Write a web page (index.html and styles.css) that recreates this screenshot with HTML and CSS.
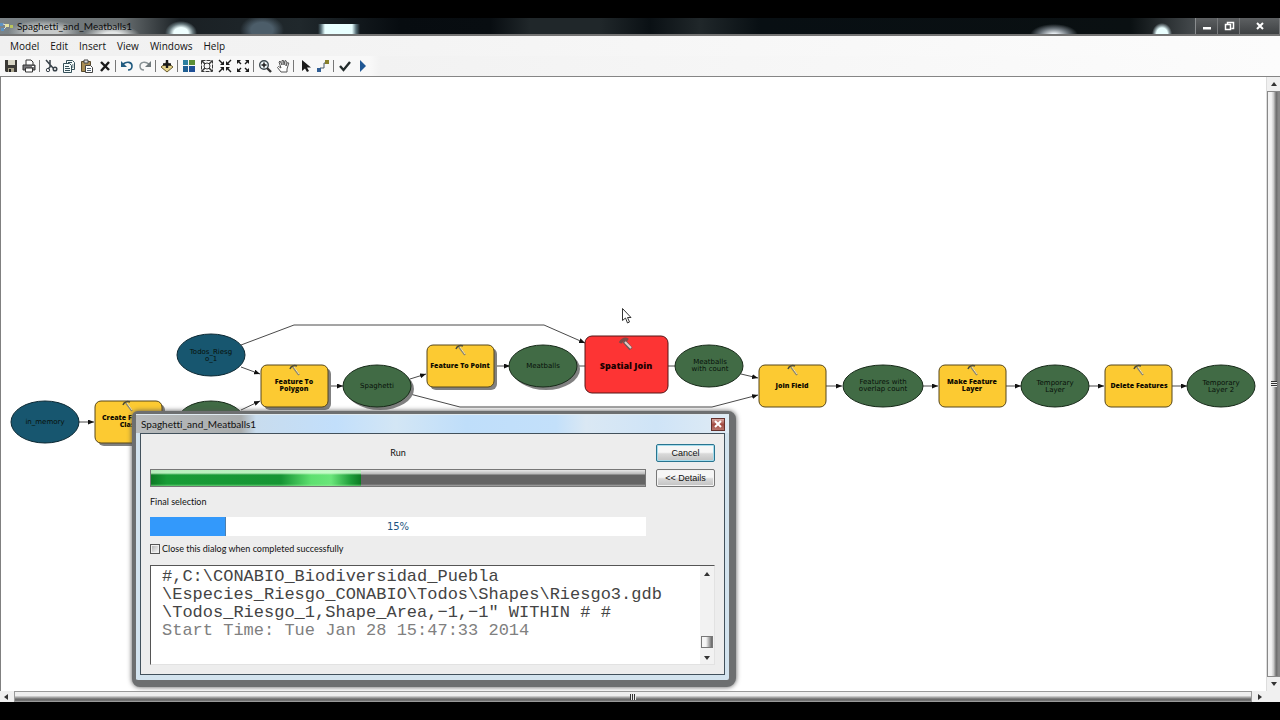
FILE: index.html
```html
<!DOCTYPE html>
<html lang="en">
<head>
<meta charset="utf-8">
<title>Spaghetti_and_Meatballs1</title>
<link rel="stylesheet" href="styles.css">
</head>
<body>
<div class="window">
  <header class="titlebar">
    <svg class="app-icon" viewBox="0 0 14 14" aria-hidden="true"><path d="M0 4h3v3H0zM1 9h3v3H1z" fill="#5d93c4"/><path d="M3 5l3 1M4 10l3-3" stroke="#cde" fill="none"/><rect x="5" y="5" width="4" height="3" fill="#e5e1a0"/><rect x="10" y="6" width="3" height="3" fill="#b9c55c"/></svg>
    <h1 class="title">Spaghetti_and_Meatballs1</h1>
    <div class="caption-buttons">
      <button class="caption" aria-label="Minimize"><svg viewBox="0 0 12 12"><path d="M2 7h8v2.500H2z" fill="#fff"/></svg></button>
      <button class="caption" aria-label="Restore"><svg viewBox="0 0 12 12"><path d="M4.500 4V2.500h6v6H8.500M2.500 4.500h5v5h-5z" fill="none" stroke="#fff" stroke-width="1.500"/></svg></button>
      <button class="caption caption-close" aria-label="Close"><svg viewBox="0 0 12 12"><path d="M3 3l6 6M9 3l-6 6" stroke="#fff" stroke-width="2"/></svg></button>
    </div>
  </header>
  <nav class="menubar">
    <button>Model</button><button>Edit</button><button>Insert</button><button>View</button><button>Windows</button><button>Help</button>
  </nav>
  <div class="toolbar" role="toolbar">
    <button aria-label="Save"><svg viewBox="0 0 14 14"><path d="M1 1h12v12H2l-1-1z" fill="#3c3a36"/><path d="M4 1h7v5H4z" fill="#d9d6c6"/><path d="M4 9h6v4H4z" fill="#a9a38c"/><path d="M5 10h2v3H5z" fill="#222"/></svg></button>
    <button aria-label="Print"><svg viewBox="0 0 14 14"><path d="M4 6V1h5l2 2v3" fill="#fff" stroke="#333"/><path d="M1 6h12v5H1z" fill="#77777a" stroke="#333"/><path d="M3.500 9h7v4h-7z" fill="#fff" stroke="#333"/><path d="M10 7.500h2" stroke="#fff"/></svg></button>
    <i class="sep"></i>
    <button aria-label="Cut"><svg viewBox="0 0 14 14" fill="none" stroke="#39424a"><path d="M2 1l7 8M6 1v7l-2 2" stroke-width="1.500"/><circle cx="4" cy="11" r="1.700"/><circle cx="11" cy="10" r="1.800" stroke-width="1.500"/></svg></button>
    <button aria-label="Copy"><svg viewBox="0 0 14 14" fill="#f4fbfb" stroke="#36515a"><path d="M4.500 1.500h6l2 2v7h-8z"/><path d="M1.500 4.500h6l2 2v7h-8z"/><path d="M3 7.500h4M3 9.500h5M3 11.500h5M6 3.500h4M10 6h1.500M10 8h1.500"/></svg></button>
    <button aria-label="Paste"><svg viewBox="0 0 14 14"><path d="M1.500 2.500h9v10h-9z" fill="#a88c54" stroke="#56482c"/><path d="M4 1h4v3H4z" fill="#ddd" stroke="#444"/><path d="M5.500 6.500h5l2 2v5h-7z" fill="#fff" stroke="#444"/><path d="M7 9.500h4M7 11.500h4" stroke="#567"/></svg></button>
    <button aria-label="Delete"><svg viewBox="0 0 14 14"><path d="M3 3l8 8M11 3l-8 9" stroke="#1b1b1b" stroke-width="2.400"/></svg></button>
    <i class="sep"></i>
    <button aria-label="Undo"><svg viewBox="0 0 14 14"><path d="M3 5c4-3 9-2 9 2 0 3-2 4-4 4" fill="none" stroke="#215b80" stroke-width="1.600"/><path d="M1 2v6h6z" fill="#215b80"/></svg></button>
    <button aria-label="Redo"><svg viewBox="0 0 14 14"><path d="M11 5C7 2 2 3 2 7c0 3 2 4 4 4" fill="none" stroke="#8a9396" stroke-width="1.500"/><path d="M13 2v6H7z" fill="#6f787b"/></svg></button>
    <i class="sep"></i>
    <button aria-label="Add data"><svg viewBox="0 0 14 14"><path d="M1 8l6-5 6 5-6 5z" fill="#e6d48c" stroke="#6a5c2c"/><path d="M7 1v8M3 5.500h8" stroke="#1b1b1b" stroke-width="2.400"/></svg></button>
    <i class="sep"></i>
    <button aria-label="Auto layout"><svg viewBox="0 0 14 14"><path d="M1 1h5v5H1z" fill="#2c7fa0"/><path d="M1 7h5v6H1z" fill="#1f5f92"/><path d="M7 1h6v5H7z" fill="#5b8e36"/><path d="M7 7h6v6H7z" fill="#1e4f97"/></svg></button>
    <button aria-label="Full extent"><svg viewBox="0 0 14 14" fill="none" stroke="#3a3a3a"><path d="M1.500 1.500h11v11h-11z" stroke-dasharray="4 1"/><circle cx="7" cy="7" r="3"/><path d="M2 2l3 3M12 2L9 5M2 12l3-3M12 12L9 9" stroke-width="1.500"/></svg></button>
    <button aria-label="Fixed zoom in"><svg viewBox="0 0 14 14" fill="#1b1b1b" stroke="#1b1b1b"><path d="M1 1l4 4M13 1L9 5M1 13l4-4M13 13L9 9" stroke-width="1.400"/><path d="M2 6h4V2zM12 6H8V2zM2 8h4v4zM12 8H8v4z" stroke="none"/></svg></button>
    <button aria-label="Fixed zoom out"><svg viewBox="0 0 14 14" fill="#1b1b1b" stroke="#1b1b1b"><path d="M2 2l3 3M12 2L9 5M2 12l3-3M12 12L9 9" stroke-width="1.400"/><path d="M1 1h4L1 5zM13 1H9l4 4zM1 13h4L1 9zM13 13H9l4-4z" stroke="none"/></svg></button>
    <i class="sep"></i>
    <button aria-label="Zoom in"><svg viewBox="0 0 14 14" fill="none"><circle cx="6" cy="6" r="4.300" fill="#edf5f8" stroke="#3b474d" stroke-width="1.400"/><path d="M9 9l4 4" stroke="#333" stroke-width="2.400"/><path d="M6 3.500v5M3.500 6h5" stroke="#1b1b1b" stroke-width="1.500"/></svg></button>
    <button aria-label="Pan"><svg viewBox="0 0 14 14"><path d="M5 13L1.500 8.500l1-1L5 9 3 3l1-1 2 4V1.500h1.500L8 6l1-4.500 1.300.5L10 7l1.500-3.500 1.300.5L11 10v3z" fill="#fff" stroke="#555"/></svg></button>
    <i class="sep"></i>
    <button aria-label="Select"><svg viewBox="0 0 14 14"><path d="M4 1v11l3-2.500L9 13l2-1-2-3.500h4z" fill="#1b1b1b"/></svg></button>
    <button aria-label="Add connection"><svg viewBox="0 0 14 14"><path d="M4 9h4V4h2" fill="none" stroke="#4a5a66"/><path d="M9 1h4v4H9z" fill="#87802b"/><path d="M1 9h4v4H1z" fill="#315f96"/></svg></button>
    <i class="sep"></i>
    <button aria-label="Validate"><svg viewBox="0 0 14 14"><path d="M2 7l3.500 4L12 3" fill="none" stroke="#222b2b" stroke-width="2.400"/></svg></button>
    <button aria-label="Run"><svg viewBox="0 0 14 14"><path d="M4 1l6 6-6 6z" fill="#1f5794"/></svg></button>
  </div>

  <main class="workspace">
    <div class="canvas">
      <svg class="diagram" width="1266" height="614" viewBox="0 77 1266 614" role="img" aria-label="Model diagram">
        <defs>
          <marker id="arrow" markerWidth="6" markerHeight="5" refX="6" refY="2.500" orient="auto" markerUnits="userSpaceOnUse"><path d="M0 0l6 2.500-6 2.500z" fill="#111"/></marker>
          <g id="hammer"><path d="M-4 4C-3 1 0 0 3 1" fill="none" stroke="#4d4b38" stroke-width="1.500"/><path d="M-1 2l6 8" stroke="#8b8670" stroke-width="2"/><path d="M0 2l5 7" stroke="#f6e3a8"/></g>
          <rect id="tool" x="-34" y="-21" width="67" height="42" rx="6"/>
          <ellipse id="data" rx="34" ry="21"/>
        </defs>
        <g class="edges">
          <path d="M241 345L294 325H544L585 343"/>
          <path d="M241 367L260 374"/>
          <path d="M78 422H94"/>
          <path d="M241 410L260 401"/>
          <path d="M328 386H343"/>
          <path d="M410 379L426 374"/>
          <path d="M494 366H510"/>
          <path d="M410 394L460 407H712L758 395"/>
          <path d="M741 374L758 378"/>
          <path d="M826 386H842"/>
          <path d="M923 386H938"/>
          <path d="M1006 386H1021"/>
          <path d="M1089 386H1104"/>
          <path d="M1172 386H1187"/>
        </g>
        <path class="plain" d="M577 366H586M668 366H676"/>
        <g class="shadow">
          <use href="#tool" x="132" y="425"/><use href="#tool" x="298" y="389"/><use href="#tool" x="464" y="369"/>
          <use href="#data" x="380" y="389"/><use href="#data" x="546" y="369"/>
        </g>
        <g class="input"><use href="#data" x="211" y="355"/><use href="#data" x="45" y="422"/></g>
        <g class="output">
          <use href="#data" x="211" y="422"/><use href="#data" x="377" y="386"/><use href="#data" x="543" y="366"/><use href="#data" x="709" y="366"/>
          <ellipse cx="883" cy="386" rx="40" ry="21"/>
          <use href="#data" x="1055" y="386"/><use href="#data" x="1221" y="386"/>
        </g>
        <g class="process">
          <use href="#tool" x="129" y="422"/><use href="#tool" x="295" y="386"/><use href="#tool" x="461" y="366"/>
          <use href="#tool" x="793" y="386"/><use href="#tool" x="973" y="386"/><use href="#tool" x="1139" y="386"/>
        </g>
        <rect class="running" x="585" y="336" width="83" height="57" rx="7"/>
        <use href="#hammer" x="127" y="401"/><use href="#hammer" x="294" y="365"/><use href="#hammer" x="460" y="345"/><use href="#hammer" x="792" y="365"/><use href="#hammer" x="972" y="365"/><use href="#hammer" x="1138" y="365"/>
        <path d="M620 343c2-3 5-5 8-3" fill="none" stroke="#7d4a46" stroke-width="3"/><path d="M624 341l7 8" stroke="#6b5b5a" stroke-width="4"/><path d="M625 342l6 6" stroke="#e9c9c3" stroke-width="2"/>
        <g class="label">
          <text x="211" y="354">Todos_Riesg</text><text x="211" y="361">o_1</text>
          <text x="45" y="424">in_memory</text>
          <text x="377" y="388">Spaghetti</text>
          <text x="543" y="368">Meatballs</text>
          <text x="710" y="364">Meatballs</text><text x="710" y="371">with count</text>
          <text x="883" y="384">Features with</text><text x="883" y="391">overlap count</text>
          <text x="1055" y="385">Temporary</text><text x="1055" y="392">Layer</text>
          <text x="1221" y="385">Temporary</text><text x="1221" y="392">Layer 2</text>
        </g>
        <g class="label strong">
          <text x="129" y="420">Create Feature</text><text x="129" y="427">Class</text>
          <text x="294" y="384">Feature To</text><text x="294" y="391">Polygon</text>
          <text x="460" y="368">Feature To Point</text>
          <text x="792" y="388">Join Field</text>
          <text x="972" y="384">Make Feature</text><text x="972" y="391">Layer</text>
          <text x="1139" y="388">Delete Features</text>
        </g>
        <text class="label-running" x="626" y="369">Spatial Join</text>
        <path d="M622.500 308.500v12l3-2.500 2 5 2-1-2-4.500h3.500z" fill="#fff" stroke="#333"/>
      </svg>

      <section class="dialog" role="dialog" aria-labelledby="dialog-title">
        <header class="dialog-title">
          <h2 id="dialog-title">Spaghetti_and_Meatballs1</h2>
          <button class="dialog-close" aria-label="Close dialog"><svg viewBox="0 0 10 8"><path d="M2 1l6 6M8 1L2 7" stroke="#fff" stroke-width="2"/></svg></button>
        </header>
        <div class="dialog-body">
          <div class="run-grid">
            <span class="run-label" id="run-label">Run</span>
            <button class="push primary">Cancel</button>
            <div class="marquee" role="progressbar" aria-labelledby="run-label"><div class="marquee-fill"></div></div>
            <button class="push">&lt;&lt; Details</button>
          </div>
          <p class="step" id="step">Final selection</p>
          <div class="percent" role="progressbar" aria-valuenow="15" aria-labelledby="step"><div class="percent-fill" style="width:15.3%"></div><span>15%</span></div>
          <div class="option"><input type="checkbox" id="autoclose"><label for="autoclose">Close this dialog when completed successfully</label></div>
          <div class="log">
            <div class="log-text" role="log" tabindex="0"><div>#,C:\CONABIO_Biodiversidad_Puebla</div><div>\Especies_Riesgo_CONABIO\Todos\Shapes\Riesgo3.gdb</div><div>\Todos_Riesgo_1,Shape_Area,−1,−1" WITHIN # #</div><div class="dim">Start Time: Tue Jan 28 15:47:33 2014</div></div>
            <div class="log-scroll"><i class="up"></i><b></b><i class="down"></i></div>
          </div>
        </div>
      </section>
    </div>
    <div class="vscroll"><i class="up"></i><div class="thumb"><span></span></div><i class="down"></i></div>
    <div class="hscroll"><i class="left"></i><div class="thumb"><span></span></div><i class="right"></i></div>
  </main>
</div>
</body>
</html>
```
FILE: styles.css
```css
* { box-sizing: border-box; }
body { margin: 0; background: #000; font-family: "Liberation Sans", Arial, sans-serif; color: #111; font-variant-ligatures: none; }
button { margin: 0; padding: 0; border: 0; background: none; font: inherit; color: inherit; }
svg { display: block; }
h1, h2, p { margin: 0; font-weight: 400; }

.window { display: flex; flex-direction: column; height: 100vh; padding: 18px 0; }

.titlebar {
  display: flex; align-items: center; height: 18px; flex: none;
  border-bottom: 2px solid #747474;
  background:
    radial-gradient(ellipse 10px 11px at 1162px 16px, #eaffff 55%, #89989c 75%, transparent),
    radial-gradient(ellipse 24px 11px at 1054px 17px, #e4eaef 15%, #687178 60%, transparent),
    linear-gradient(90deg, transparent 318px, #587078 321px, #e8ffff 325px 352px, #587078 356px, transparent 360px) 0 6px no-repeat,
    radial-gradient(ellipse 22px 15px at 262px 12px, #4c5d69 50%, transparent),
    radial-gradient(ellipse 16px 12px at 181px 15px, #efffff 45%, #66777c 75%, transparent),
    radial-gradient(ellipse 28px 10px at 112px 17px, #e2e5e5 30%, transparent),
    radial-gradient(ellipse 36px 12px at 44px 14px, #c7caca 40%, transparent),
    linear-gradient(90deg, #7c8488 0, #6b7173 120px, #1a2024 180px, #20282c 300px, #070c10 400px, #080d11 490px, #20272a 530px, #20272a 600px, #0a1014 650px, #20272a 700px, #080f13 760px, #0a1012 1130px, #454a4d 1195px, #55585a);
}
.app-icon { width: 14px; height: 14px; margin-right: 3px; }
.title { flex: 1; font-family: Lato, sans-serif; font-size: 10px; line-height: 16px; color: #0b0b0b; }
.caption-buttons { display: flex; height: 16px; border-left: 1px solid #8a8d8f; }
.caption { display: grid; place-items: center; width: 22px; border-right: 1px solid #77797b; background: linear-gradient(#5d6062, #3e4143); }
.caption svg { width: 12px; height: 12px; }
.caption-close { width: 40px; }

.menubar { display: flex; gap: 11px; height: 20px; flex: none; padding-left: 10px; background: linear-gradient(90deg, #f0f0f0, #fcfcfc); }
.menubar button { font: 10px/20px "Open Sans", sans-serif; }
.toolbar { display: flex; align-items: center; height: 20px; flex: none; padding-left: 2px; background: linear-gradient(90deg, #f8f8f8 0 370px, #f2f2f2 380px, #fcfcfc); }
.toolbar button { display: grid; place-items: center; width: 18px; height: 18px; }
.toolbar svg { width: 14px; height: 14px; }
.sep { width: 4px; height: 12px; border-left: 1px solid transparent; background: linear-gradient(90deg, #777 1px, transparent 1px) content-box; }

.workspace { flex: 1; min-height: 0; display: grid; grid-template: 1fr 11px / 1fr 14px; border-top: 1px solid #858585; background: #f0f0f0; }
.canvas { position: relative; overflow: hidden; background: #fff; border-left: 1px solid #808080; }
.diagram { margin-left: -1px; }
.edges path, .plain { fill: none; stroke: #4a4a4a; }
.edges path { marker-end: url(#arrow); }
.shadow { fill: #808080; }
.input { fill: #17566f; stroke: #0c2934; }
.output { fill: #416b45; stroke: #172a19; }
.process { fill: #fcca32; stroke: #57471a; }
.running { fill: #fd3434; stroke: #541515; }
.label { font-family: "DejaVu Sans", sans-serif; font-size: 7px; text-anchor: middle; fill: #071009; }
.strong { font-family: "Open Sans", sans-serif; font-weight: 800; fill: #100c00; }
.label-running { font: 800 9px "Open Sans", sans-serif; text-anchor: middle; fill: #1c0000; }

.dialog {
  position: absolute; left: 131px; top: 334px; width: 604px;
  border: solid #6d6f70; border-width: 3px 7px 7px 4px; border-radius: 6px 8px 9px 8px;
  box-shadow: 0 0 5px #555;
  background: #d3e3ee;
}
.dialog-title { display: flex; align-items: center; justify-content: space-between; height: 19px; padding: 0 4px 0 5px; border-top: 1px solid #dfe9ef;
  background: linear-gradient(90deg, #b9bcbd 0, #a9adae 105px, #c8dcee 120px, #c2dffb 200px, #d3e6f5 260px, #bfdefa 330px, #c3e0fa 420px, #dae8f4 450px, #cfe4f7 520px, #dfebf4); }
.dialog-title h2 { font-family: Lato, sans-serif; font-size: 10px; line-height: 16px; }
.dialog-close { display: grid; place-items: center; width: 14px; height: 13px; border: 1px solid #65312d; background: linear-gradient(#dba9a3, #a34c43 50%, #b8746b); }
.dialog-close svg { width: 10px; height: 8px; }
.dialog-body { margin: 0 4px 5px; padding: 10px 9px 9px; border: 1px solid #42515c; background: #ededed; font-family: Lato, sans-serif; font-size: 9px; line-height: 12px; }
.run-grid { display: grid; grid-template-columns: 1fr 59px; gap: 7px 10px; }
.run-label { text-align: center; line-height: 18px; }
.push { height: 18px; border: 1px solid #777; border-radius: 2px; font-family: "Liberation Sans", Arial, sans-serif; background: linear-gradient(#f6f6f6 0 45%, #d9d9d9 55%, #c2c2c2); box-shadow: inset 0 0 0 1px #f4f4f4; }
.primary { border-color: #28748f; box-shadow: inset 0 0 0 1px #a6dcec; }
.marquee { height: 18px; border: 1px solid #777; background: linear-gradient(#e8e8e8, #b8b8b8 4px, #646464 5px 14px, #aaa 16px); }
.marquee-fill { width: 210px; height: 16px; background:
  linear-gradient(rgba(215,255,215,.85) 0 3px, transparent 5px 14px, rgba(160,240,160,.6)),
  linear-gradient(90deg, #0d7a24, #189c36 16px, #169534 130px, #5ee070 160px, #6ae67a 180px, #1d9c38 200px, #0c7a22); }
.step { margin: 9px 0; }
.percent { position: relative; height: 19px; background: #fff; margin-right: 69px; color: #1c5480; }
.percent-fill { height: 100%; background: #3399fb; border-right: 1px solid #4d7fae; }
.percent span { position: absolute; inset: 0; text-align: center; font: 10px/19px "DejaVu Sans", sans-serif; }
.option { display: flex; align-items: center; gap: 2px; height: 12px; margin: 7px 0 10px; }
.option input { appearance: none; width: 10px; height: 10px; margin: 0; border: 1px solid #555; background: linear-gradient(135deg, #aaa, #fff); box-shadow: inset 0 0 0 1px #f0f0f0; }
.log { display: flex; height: 100px; border: 1px solid #e2e2e2; border-top-color: #555; border-left-color: #555; background: #fff; }
.log-text { flex: 1; padding: 2px 0 0 11px; font: 17px/18px "Liberation Mono", "Courier New", monospace; color: #444; white-space: pre; overflow: hidden; }
.dim { color: #808080; }
.log-scroll { display: flex; flex-direction: column; align-items: center; width: 14px; padding: 6px 0 4px; background: #f2f2f2; }
.log-scroll b { width: 12px; height: 12px; margin-top: auto; margin-bottom: 8px; border: 1px solid #777; background: linear-gradient(90deg, #f4f4f4 40%, #666); }

.up, .down { width: 0; height: 0; border: 3px solid transparent; }
.up { border-top: 0; border-bottom: 4px solid #333; }
.down { border-bottom: 0; border-top: 4px solid #333; }
.left, .right { width: 0; height: 0; border: 3px solid transparent; }
.left { border-left: 0; border-right: 4px solid #333; }
.right { border-right: 0; border-left: 4px solid #333; }
.vscroll { display: flex; flex-direction: column; align-items: center; padding: 5px 0; gap: 5px; border-left: 1px solid #ddd; }
.vscroll .thumb { flex: 1; width: 100%; display: grid; place-items: center; border: 1px solid #888; background: linear-gradient(90deg, #f3f3f3 0 30%, #ccc 50%, #6d6d6d 75%, #8d8d8d); }
.vscroll span { width: 6px; height: 6px; background: repeating-linear-gradient(#333 0 1px, #eee 1px 2px); }
.hscroll { display: flex; align-items: center; padding: 0 4px; gap: 6px; }
.hscroll .thumb { flex: 1; height: 100%; display: grid; place-items: center; border: 1px solid #999; background: linear-gradient(#eee 0 40%, #b5b5b5 55%, #666 80%, #777); }
.hscroll span { width: 6px; height: 6px; background: repeating-linear-gradient(90deg, #333 0 1px, #eee 1px 2px); }
```
